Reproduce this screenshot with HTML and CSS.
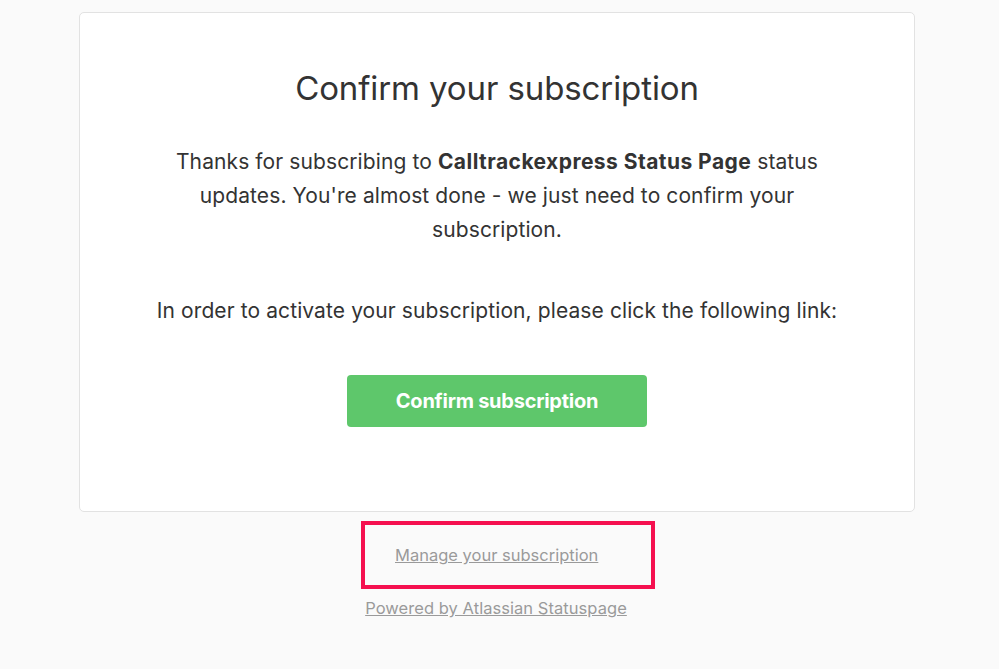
FILE: index.html
```html
<!DOCTYPE html>
<html lang="en">
<head>
<meta charset="utf-8">
<title>Confirm your subscription</title>
<link rel="stylesheet" href="styles.css">
</head>
<body>
<main class="page">
  <section class="card">
    <h1 class="title">Confirm your subscription</h1>
    <p class="lead">Thanks for subscribing to <strong>Calltrackexpress Status Page</strong> status updates. You're almost done - we just need to confirm your subscription.</p>
    <p class="instructions">In order to activate your subscription, please click the following link:</p>
    <div class="actions">
      <a class="btn" href="#">Confirm subscription</a>
    </div>
  </section>
  <footer class="footer">
    <div class="highlight">
      <a class="foot-link" href="#">Manage your subscription</a>
    </div>
    <a class="foot-link powered" href="#">Powered by Atlassian Statuspage</a>
  </footer>
</main>
</body>
</html>
```

FILE: styles.css
```css
* { box-sizing: border-box; }
html, body {
  margin: 0;
  padding: 0;
  background: #fafafa;
}
body {
  font-family: Inter, "Liberation Sans", Arial, sans-serif;
  color: #333333;
}
.page {
  width: 836px;
  margin: 12px 0 0 79px;
}
.card {
  background: #ffffff;
  border: 1px solid #e2e2e2;
  border-radius: 5px;
  padding: 55px 68px 84px;
  text-align: center;
}
.title {
  margin: 0;
  font-size: 33px;
  font-weight: 400;
  line-height: 40px;
  letter-spacing: -0.1px;
  color: #333333;
}
.lead {
  margin: 37px 0 0;
  font-size: 21px;
  line-height: 34px;
  letter-spacing: 0.1px;
}
.lead strong {
  font-weight: 700;
  letter-spacing: 0.45px;
}
.instructions {
  margin: 47px 0 0;
  font-size: 21px;
  line-height: 34px;
  letter-spacing: 0.1px;
}
.actions {
  margin-top: 47px;
  display: flex;
  justify-content: center;
}
.btn {
  display: flex;
  align-items: center;
  justify-content: center;
  width: 300px;
  height: 52px;
  background: #5ec76b;
  border-radius: 4px;
  color: #ffffff;
  font-weight: 700;
  font-size: 20px;
  letter-spacing: -0.25px;
  text-decoration: none;
}
.footer {
  display: flex;
  flex-direction: column;
  align-items: center;
  padding-top: 9px;
}
.highlight {
  display: flex;
  align-items: center;
  width: 294px;
  height: 68px;
  border: 4px solid #f5104f;
  padding-left: 30px;
  margin-left: 22px;
}
.foot-link {
  color: #9a9a9a;
  font-size: 16.5px;
  text-decoration: underline;
}
.powered {
  margin-top: 9px;
  margin-left: -2px;
  letter-spacing: 0.05px;
}
```
